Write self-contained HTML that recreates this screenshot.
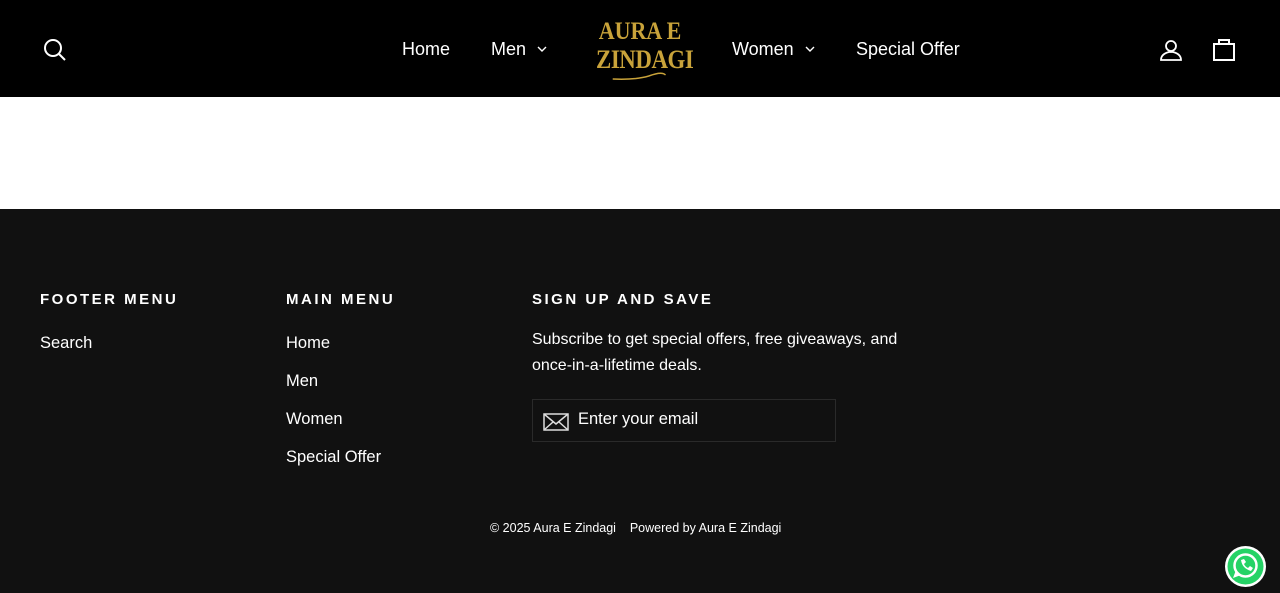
<!DOCTYPE html>
<html><head><meta charset="utf-8"><style>
*{margin:0;padding:0;box-sizing:border-box}
body{width:1280px;height:593px;overflow:hidden;background:#fff;font-family:"Liberation Sans",sans-serif}
header{height:97px;background:#000;position:relative;color:#fff}
.nav{position:absolute;top:39px;font-size:18px}
.chev{position:absolute;top:46px}
.logo{position:absolute;left:590px;top:18px;width:100px;text-align:center;color:#c9a33a;font-family:"Liberation Serif",serif;line-height:28px;font-size:25px;white-space:nowrap;font-weight:bold;transform:scaleX(0.88)}
footer{position:absolute;top:209px;left:0;width:1280px;height:384px;background:#111;color:#fff}
h4{position:absolute;top:82px;font-size:15px;letter-spacing:2.5px;font-weight:bold}
.l{position:absolute;font-size:16.5px}
</style></head><body>
<header>
<svg style="position:absolute;left:43px;top:38px" width="24" height="24" viewBox="0 0 24 24" fill="none" stroke="#fff" stroke-width="2"><circle cx="10" cy="10" r="8"/><path d="M16 16l6 6"/></svg>
<div class="nav" style="left:402px">Home</div>
<div class="nav" style="left:491px">Men</div>
<svg class="chev" style="left:537px" width="10" height="7" viewBox="0 0 10 7" fill="none" stroke="#fff" stroke-width="1.4"><path d="M1 1l4 4 4-4"/></svg>
<div class="logo">AURA E<br><span style="font-size:26px;letter-spacing:-0.5px">ZINDAGI</span><svg width="70" height="10" style="display:block;margin:-4px auto 0" viewBox="0 0 70 10"><path d="M4 8 Q30 9 45 5 Q60 0 64 4" stroke="#c9a33a" fill="none" stroke-width="1.5"/></svg></div>
<div class="nav" style="left:732px">Women</div>
<svg class="chev" style="left:805px" width="10" height="7" viewBox="0 0 10 7" fill="none" stroke="#fff" stroke-width="1.4"><path d="M1 1l4 4 4-4"/></svg>
<div class="nav" style="left:856px">Special Offer</div>
<svg style="position:absolute;left:1159px;top:38px" width="24" height="24" viewBox="0 0 24 24" fill="none" stroke="#fff" stroke-width="1.8"><circle cx="12" cy="8" r="5"/><path d="M2 22c0-5 4-7 8-8h4c4 1 8 3 8 8z"/></svg>
<svg style="position:absolute;left:1212px;top:37px" width="24" height="25" viewBox="0 0 24 25" fill="none" stroke="#fff" stroke-width="2"><rect x="2" y="7" width="20" height="16"/><path d="M7 7V3h10v4"/></svg>
</header>
<footer>
<h4 style="left:40px">FOOTER MENU</h4>
<h4 style="left:286px">MAIN MENU</h4>
<h4 style="left:532px">SIGN UP AND SAVE</h4>
<div class="l" style="left:40px;top:125px">Search</div>
<div class="l" style="left:286px;top:125px">Home</div>
<div class="l" style="left:286px;top:163px">Men</div>
<div class="l" style="left:286px;top:201px">Women</div>
<div class="l" style="left:286px;top:239px">Special Offer</div>
<div class="l" style="left:532px;top:118px;line-height:26px;font-size:16px">Subscribe to get special offers, free giveaways, and<br>once-in-a-lifetime deals.</div>
<div style="position:absolute;left:532px;top:190px;width:304px;height:43px;border:1px solid #2a2a2a"></div>
<svg style="position:absolute;left:543px;top:204px" width="26" height="18" viewBox="0 0 26 18" fill="none" stroke="#ddd" stroke-width="1.5"><rect x="1" y="1" width="24" height="16"/><path d="M1 1l12 10 12-10M1 17l9-8M25 17l-9-8"/></svg>
<div class="l" style="left:578px;top:201px">Enter your email</div>
<div style="position:absolute;left:490px;top:312px;font-size:12.5px">© 2025 Aura E Zindagi &nbsp;&nbsp; Powered by Aura E Zindagi</div>
<svg style="position:absolute;left:1224px;top:336px" width="43" height="43" viewBox="0 0 43 43"><circle cx="21.5" cy="21.5" r="20.5" fill="#fff"/><circle cx="21.5" cy="21.5" r="18" fill="#25d366"/><circle cx="21.5" cy="20.5" r="11" fill="none" stroke="#fff" stroke-width="2.5"/><path d="M9 33l3-8 5 5z" fill="#fff"/><path d="M17 15c1 6 4 9 10 11l2-3-3-2-2 2c-2-1-3-2-4-4l2-2-2-3z" fill="#fff"/></svg>
</footer>
</body></html>
